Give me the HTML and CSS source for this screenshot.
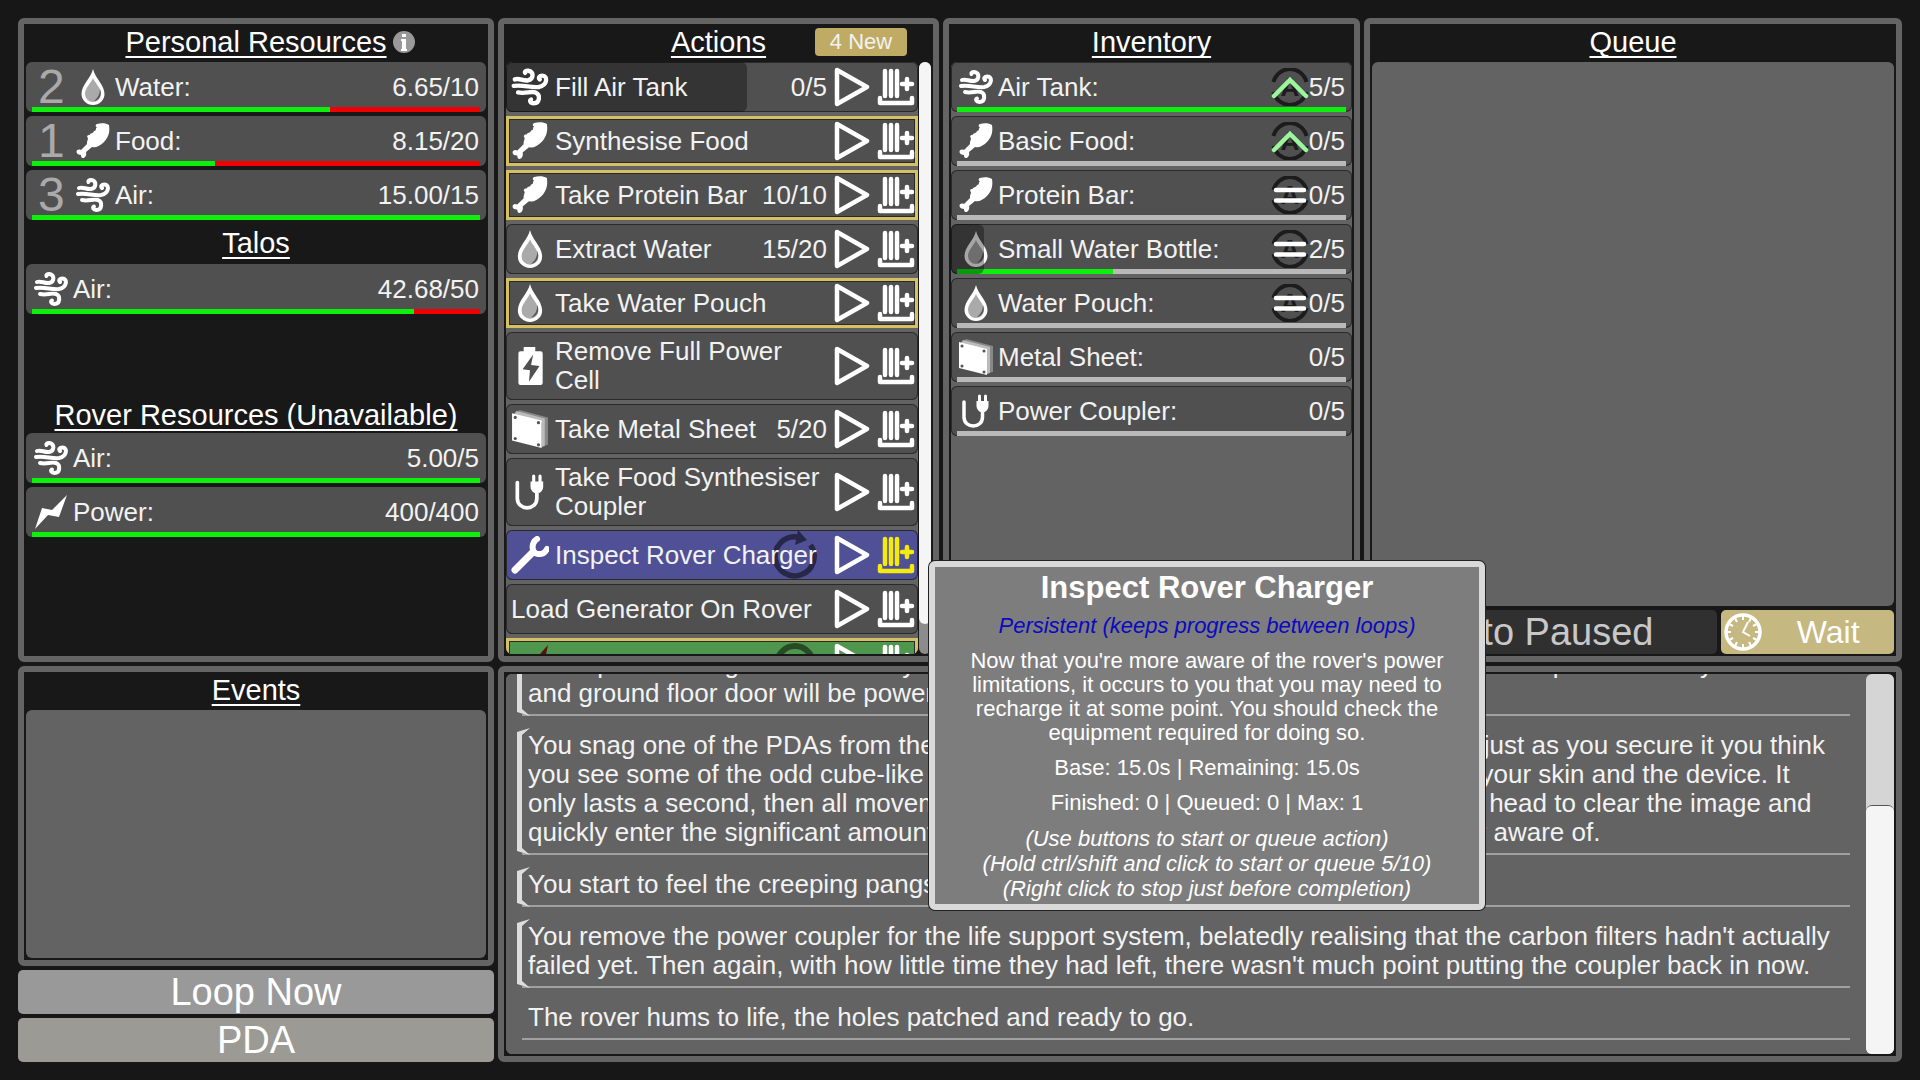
FILE: index.html
```
<!DOCTYPE html>
<html lang="en">
<head>
  <meta charset="UTF-8">
  <title>Rover Loop</title>
  <link rel="stylesheet" href="styles.css">
</head>
<body>
  <!-- Icon sprite -->
  <svg class="sprite" aria-hidden="true">
    <symbol id="i-air" viewBox="0 0 34 35">
      <g fill="none" stroke="#fff" stroke-width="4" stroke-linecap="round">
        <path d="M3 10.500C7 9 10 12 15 11.500C20.500 10.500 21 3 15.500 2.500C13 2.300 12 3.500 12.500 4.500"/>
        <path d="M2 16.500C10 15 18 18.500 25 17.500C33.500 16 33.500 7 28.500 7C25.500 7 24.500 9 26 10.500"/>
        <path d="M6 22.500C13 24 17 21 22 22.500C27 24.500 26 32.500 20.500 32.500C17 32.500 16.500 30 18 29"/>
      </g>
    </symbol>
    <symbol id="i-water" viewBox="0 0 34 36">
      <path fill="#fff" d="M17 0C15 9 5.500 16 5.500 25A11.500 11 0 0 0 28.500 25C28.500 16 19 9 17 0Z"/>
      <path fill="#aaa" d="M17 9C15 14 9 19 9 25A8 8 0 0 0 25 25C25 19 19 14 17 9Z"/>
      <path fill="#555" d="M24 20C26 25 24 31 18 32C22 29 24 25 24 20Z"/>
    </symbol>
    <symbol id="i-food" viewBox="0 0 34 36">
      <path fill="#fff" d="M21 1C25 0 30 0 33 2C34 8 33 14 28 19C24 23 20 25 16 24L10 29C11 32 9 35.500 6.500 35C5 34.500 5 33 5 32C3 32 .5 31 .5 29C.5 26.500 3 26 5 27L11 21C10.500 19 12 17 12 15C10 13.500 12 11.500 13.500 12C14.500 9.500 17 11 18 8C21 8 19 5 21 4.500C19 3.500 19.500 1.500 21 1Z"/>
    </symbol>
    <symbol id="i-power" viewBox="0 0 34 34">
      <path fill="#fff" d="M33 0L25 22L14 20L1 34L8 13L18 15Z"/>
    </symbol>
    <symbol id="i-cell" viewBox="0 0 34 36">
      <path fill="#fff" d="M11 0H22V4H27Q29 4 29 6V34Q29 36 27 36H8Q6 36 6 34V6Q6 4 8 4H11Z"/>
      <path fill="#505050" d="M20 7L10 21L17 22L16 33L26 18L18 17Z"/>
    </symbol>
    <symbol id="i-metal" viewBox="0 0 34 36">
      <path fill="#888" d="M7 0L34 7V33L29 34V12L5 2Z"/>
      <path fill="#bbb" d="M4 1L31 8V34L28 35V12L2 4Z"/>
      <path fill="#fff" d="M0 3L28 10V36L0 29Z"/>
      <g fill="#555">
        <circle cx="3" cy="7" r="1.500"/><circle cx="25" cy="12" r="1.500"/>
        <circle cx="3" cy="27" r="1.500"/><circle cx="25" cy="33" r="1.500"/>
      </g>
    </symbol>
    <symbol id="i-plug" viewBox="0 0 34 36">
      <path fill="none" stroke="#fff" stroke-width="3.500" stroke-linecap="round" d="M5 9V24C5 36 23.500 36 23.500 24V16"/>
      <path fill="none" stroke="#fff" stroke-width="3" stroke-linecap="round" d="M20.500 3V9M26.500 3V9"/>
      <path fill="#fff" d="M17.500 8H29.500V13C29.500 16 27 18.500 25.500 19H21.500C20 18.500 17.500 16 17.500 13Z"/>
    </symbol>
    <symbol id="i-wrench" viewBox="0 0 38 38">
      <g fill="none" stroke="#fff" stroke-linecap="round">
        <path stroke-width="7" d="M4 34L22 16"/>
        <path stroke-width="6" d="M26 3C20 7 20 17 27 18C31 18.500 34 17 36 13"/>
      </g>
    </symbol>
    <symbol id="i-play" viewBox="0 0 36 40">
      <path fill="none" stroke="#fff" stroke-width="4.500" stroke-linejoin="round" d="M3 3L33 20L3 37Z"/>
    </symbol>
    <symbol id="i-queue" viewBox="0 0 38 38">
      <g fill="none" stroke="currentColor" stroke-width="4.500" stroke-linecap="round" stroke-linejoin="round">
        <path d="M8 3V28M14 3V28M20 3V28M25 16H35M30 11V21M3 30V35H35V30"/>
      </g>
    </symbol>
    <symbol id="i-auto" viewBox="0 0 38 38">
      <path fill="none" stroke="#1c1c1c" stroke-width="4" d="M2.500 14A17 17 0 0 1 35.500 14M2.500 24A17 17 0 0 0 35.500 24"/>
      <text class="auto-letter" x="19" y="28" text-anchor="middle">A</text>
    </symbol>
    <symbol id="i-up" viewBox="0 0 38 38">
      <use href="#i-auto"/>
      <path fill="none" stroke="#9cf79c" stroke-width="4.500" stroke-linecap="round" d="M3 28L19 12L35 28"/>
    </symbol>
    <symbol id="i-equal" viewBox="0 0 38 38">
      <use href="#i-auto"/>
      <path fill="none" stroke="#fff" stroke-width="4.500" stroke-linecap="round" d="M5 14H33M5 24.500H33"/>
    </symbol>
    <symbol id="i-loop" viewBox="0 0 44 50">
      <path fill="none" stroke="#000" stroke-width="5.500" d="M24 7A19.500 19.500 0 1 0 37.500 15"/>
      <path d="M25 0L34 10L22 15Z"/>
    </symbol>
    <symbol id="i-clock" viewBox="0 0 38 38">
      <circle cx="19" cy="19" r="17" fill="none" stroke="#fff" stroke-width="3.500"/>
      <path fill="none" stroke="#fff" stroke-width="2" d="M19 3V7M19 31V35M3 19H7M31 19H35M11 5L13 9M27 5L25 9M5 11L9 13M33 11L29 13M5 27L9 25M33 27L29 25M11 33L13 29M27 33L25 29M24 9L19 19L26 23"/>
    </symbol>
    <symbol id="i-info" viewBox="0 0 22 22">
      <circle cx="11" cy="11" r="11" fill="#999"/>
      <path fill="#fff" d="M9 3H13V6H9ZM8 8H13V18H14V20H8V18H9V10H8Z"/>
    </symbol>
  </svg>

  <main class="game">
    <!-- Resources -->
    <section class="panel resources">
      <header class="panel-head">
        <h2>Personal Resources</h2>
        <svg class="info"><use href="#i-info"/></svg>
      </header>
      <div class="rows">
        <div class="row">
          <span class="rank">2</span><svg class="icon"><use href="#i-water"/></svg>
          <span class="name">Water:</span><span class="value">6.65/10</span>
          <div class="bar drain"><i style="width: 66.5%"></i></div>
        </div>
        <div class="row">
          <span class="rank">1</span><svg class="icon"><use href="#i-food"/></svg>
          <span class="name">Food:</span><span class="value">8.15/20</span>
          <div class="bar drain"><i style="width: 40.75%"></i></div>
        </div>
        <div class="row">
          <span class="rank">3</span><svg class="icon"><use href="#i-air"/></svg>
          <span class="name">Air:</span><span class="value">15.00/15</span>
          <div class="bar drain"><i style="width: 100%"></i></div>
        </div>
      </div>
      <header class="panel-head talos"><h2>Talos</h2></header>
      <div class="rows">
        <div class="row">
          <svg class="icon"><use href="#i-air"/></svg>
          <span class="name">Air:</span><span class="value">42.68/50</span>
          <div class="bar drain"><i style="width: 85.36%"></i></div>
        </div>
      </div>
      <header class="panel-head rover"><h2>Rover Resources (Unavailable)</h2></header>
      <div class="rows">
        <div class="row">
          <svg class="icon"><use href="#i-air"/></svg>
          <span class="name">Air:</span><span class="value">5.00/5</span>
          <div class="bar drain"><i style="width: 100%"></i></div>
        </div>
        <div class="row">
          <svg class="icon"><use href="#i-power"/></svg>
          <span class="name">Power:</span><span class="value">400/400</span>
          <div class="bar drain"><i style="width: 100%"></i></div>
        </div>
      </div>
    </section>

    <!-- Actions -->
    <section class="panel actions">
      <header class="panel-head">
        <h2>Actions</h2>
        <button class="new-btn">4 New</button>
      </header>
      <div class="scroller">
        <div class="rows list">
          <div class="row">
            <div class="progress" style="width: 58.4%"></div>
            <svg class="icon"><use href="#i-air"/></svg>
            <span class="name">Fill Air Tank</span><span class="value">0/5</span>
            <button class="act" aria-label="Start"><svg><use href="#i-play"/></svg></button>
            <button class="act" aria-label="Queue"><svg><use href="#i-queue"/></svg></button>
          </div>
          <div class="row new">
            <svg class="icon"><use href="#i-food"/></svg>
            <span class="name">Synthesise Food</span>
            <button class="act" aria-label="Start"><svg><use href="#i-play"/></svg></button>
            <button class="act" aria-label="Queue"><svg><use href="#i-queue"/></svg></button>
          </div>
          <div class="row new">
            <svg class="icon"><use href="#i-food"/></svg>
            <span class="name">Take Protein Bar</span><span class="value">10/10</span>
            <button class="act" aria-label="Start"><svg><use href="#i-play"/></svg></button>
            <button class="act" aria-label="Queue"><svg><use href="#i-queue"/></svg></button>
          </div>
          <div class="row">
            <svg class="icon"><use href="#i-water"/></svg>
            <span class="name">Extract Water</span><span class="value">15/20</span>
            <button class="act" aria-label="Start"><svg><use href="#i-play"/></svg></button>
            <button class="act" aria-label="Queue"><svg><use href="#i-queue"/></svg></button>
          </div>
          <div class="row new">
            <svg class="icon"><use href="#i-water"/></svg>
            <span class="name">Take Water Pouch</span>
            <button class="act" aria-label="Start"><svg><use href="#i-play"/></svg></button>
            <button class="act" aria-label="Queue"><svg><use href="#i-queue"/></svg></button>
          </div>
          <div class="row">
            <svg class="icon"><use href="#i-cell"/></svg>
            <span class="name">Remove Full Power Cell</span>
            <button class="act" aria-label="Start"><svg><use href="#i-play"/></svg></button>
            <button class="act" aria-label="Queue"><svg><use href="#i-queue"/></svg></button>
          </div>
          <div class="row">
            <svg class="icon"><use href="#i-metal"/></svg>
            <span class="name">Take Metal Sheet</span><span class="value">5/20</span>
            <button class="act" aria-label="Start"><svg><use href="#i-play"/></svg></button>
            <button class="act" aria-label="Queue"><svg><use href="#i-queue"/></svg></button>
          </div>
          <div class="row">
            <svg class="icon"><use href="#i-plug"/></svg>
            <span class="name">Take Food Synthesiser Coupler</span>
            <button class="act" aria-label="Start"><svg><use href="#i-play"/></svg></button>
            <button class="act" aria-label="Queue"><svg><use href="#i-queue"/></svg></button>
          </div>
          <div class="row persistent">
            <svg class="loop-mark"><use href="#i-loop"/></svg>
            <svg class="icon"><use href="#i-wrench"/></svg>
            <span class="name">Inspect Rover Charger</span>
            <button class="act" aria-label="Start"><svg><use href="#i-play"/></svg></button>
            <button class="act hover" aria-label="Queue"><svg><use href="#i-queue"/></svg></button>
          </div>
          <div class="row">
            <span class="name">Load Generator On Rover</span>
            <button class="act" aria-label="Start"><svg><use href="#i-play"/></svg></button>
            <button class="act" aria-label="Queue"><svg><use href="#i-queue"/></svg></button>
          </div>
          <div class="row new travel">
            <svg class="loop-mark" viewBox="0 0 44 50"><circle cx="22" cy="26" r="18" fill="none" stroke="#000" stroke-width="6"/></svg>
            <svg class="icon" viewBox="0 0 38 38"><path fill="#5a1010" d="M37 1L22 18L33 20Z"/></svg>
            <span class="name"></span>
            <button class="act" aria-label="Start"><svg><use href="#i-play"/></svg></button>
            <button class="act" aria-label="Queue"><svg><use href="#i-queue"/></svg></button>
          </div>
        </div>
        <div class="track"><div class="thumb" style="height: 95%"></div></div>
      </div>
    </section>

    <!-- Inventory -->
    <section class="panel inventory">
      <header class="panel-head"><h2>Inventory</h2></header>
      <div class="rows list">
        <div class="row">
          <svg class="icon"><use href="#i-air"/></svg><span class="name">Air Tank:</span>
          <button class="auto" aria-label="Auto use: up"><svg><use href="#i-up"/></svg></button><span class="value">5/5</span>
          <div class="bar"><i style="width: 100%"></i></div>
        </div>
        <div class="row">
          <svg class="icon"><use href="#i-food"/></svg><span class="name">Basic Food:</span>
          <button class="auto" aria-label="Auto use: up"><svg><use href="#i-up"/></svg></button><span class="value">0/5</span>
          <div class="bar"></div>
        </div>
        <div class="row">
          <svg class="icon"><use href="#i-food"/></svg><span class="name">Protein Bar:</span>
          <button class="auto" aria-label="Auto use: equal"><svg><use href="#i-equal"/></svg></button><span class="value">0/5</span>
          <div class="bar"></div>
        </div>
        <div class="row">
          <svg class="icon"><use href="#i-water"/></svg><span class="name">Small Water Bottle:</span>
          <button class="auto" aria-label="Auto use: equal"><svg><use href="#i-equal"/></svg></button><span class="value">2/5</span>
          <div class="bar"><i style="width: 40%"></i></div>
          <div class="progress" style="width: 8.2%"></div>
        </div>
        <div class="row">
          <svg class="icon"><use href="#i-water"/></svg><span class="name">Water Pouch:</span>
          <button class="auto" aria-label="Auto use: equal"><svg><use href="#i-equal"/></svg></button><span class="value">0/5</span>
          <div class="bar"></div>
        </div>
        <div class="row">
          <svg class="icon"><use href="#i-metal"/></svg><span class="name">Metal Sheet:</span><span class="value">0/5</span>
          <div class="bar"></div>
        </div>
        <div class="row">
          <svg class="icon"><use href="#i-plug"/></svg><span class="name">Power Coupler:</span><span class="value">0/5</span>
          <div class="bar"></div>
        </div>
      </div>
    </section>

    <!-- Queue -->
    <section class="panel queue">
      <header class="panel-head"><h2>Queue</h2></header>
      <div class="list"></div>
      <div class="queue-buttons">
        <button class="pause-btn">Auto Paused</button>
        <button class="wait-btn"><svg><use href="#i-clock"/></svg><span>Wait</span></button>
      </div>
    </section>

    <!-- Events and loop buttons -->
    <div class="side">
      <section class="panel events">
        <header class="panel-head"><h2>Events</h2></header>
        <div class="list"></div>
      </section>
      <button class="loop-btn">Loop Now</button>
      <button class="loop-btn pda">PDA</button>
    </div>

    <!-- Story log -->
    <section class="panel log">
      <div class="scroller">
        <div class="entries list">
          <p class="entry marked">Once power has gone back everywhere, most of the rest of the ruined site should wake up and actually<br>and ground floor door will be powered.</p>
          <p class="entry marked">You snag one of the PDAs from the nearby shelves and hold it up to your arm, and just as you secure it you think<br>you see some of the odd cube-like creatures crawling up through the gap between your skin and the device. It<br>only lasts a second, then all movement has gone from under there. You shake your head to clear the image and<br>quickly enter the significant amount of data on this whole place that you are already aware of.</p>
          <p class="entry marked">You start to feel the creeping pangs of hunger.</p>
          <p class="entry marked">You remove the power coupler for the life support system, belatedly realising that the carbon filters hadn't actually failed yet. Then again, with how little time they had left, there wasn't much point putting the coupler back in now.</p>
          <p class="entry">The rover hums to life, the holes patched and ready to go.</p>
        </div>
        <div class="track"><div class="thumb" style="height: 65.5%"></div></div>
      </div>
    </section>
  </main>

  <!-- Hover tooltip -->
  <div class="tooltip" role="tooltip">
    <h3>Inspect Rover Charger</h3>
    <p class="kind">Persistent (keeps progress between loops)</p>
    <p>Now that you're more aware of the rover's power limitations, it occurs to you that you may need to recharge it at some point. You should check the equipment required for doing so.</p>
    <p>Base: 15.0s | Remaining: 15.0s</p>
    <p>Finished: 0 | Queued: 0 | Max: 1</p>
    <p class="hints">(Use buttons to start or queue action)<br>(Hold ctrl/shift and click to start or queue 5/10)<br>(Right click to stop just before completion)</p>
  </div>
</body>
</html>
```
FILE: styles.css
```
* { box-sizing: border-box; }
body { margin: 0; background: #171717; color: #f2f2f2; font-family: "Liberation Sans", Arial, sans-serif; font-size: 26px; line-height: 29px; }
h2, h3, p { margin: 0; font-weight: normal; }
button { padding: 0; border: none; background: none; color: inherit; font-family: inherit; cursor: pointer; }
svg { display: block; }
.sprite { position: absolute; width: 0; height: 0; }

.game { display: grid; grid-template-columns: 476fr 441fr 417fr 538fr; grid-template-rows: 644fr 396fr; gap: 4px; height: 100vh; padding: 18px; }
.panel { display: flex; flex-direction: column; min-width: 0; min-height: 0; padding: 0 2px 2px; background: #181818; border: 6px solid #646464; border-radius: 6px; }
.side { display: flex; flex-direction: column; gap: 4px; min-height: 0; }
.log { grid-column: 2 / 5; padding: 2px; }

.panel-head { display: grid; grid-template-columns: 1fr auto 1fr; align-items: center; flex: none; height: 38px; padding-bottom: 2px; column-gap: 6px; }
.panel-head h2 { grid-column: 2; color: #fff; font-size: 29px; line-height: 34px; text-decoration: underline; text-decoration-thickness: 2px; text-underline-offset: 4px; text-decoration-skip-ink: none; }
.talos { margin-top: 6px; padding-bottom: 4px; }
.rover { height: 36px; margin-top: 83px; padding-bottom: 0; }
.info { width: 22px; height: 22px; }
.new-btn { justify-self: end; width: 92px; height: 28px; margin-right: 24px; border-radius: 4px; background: #bfab63; font-size: 22px; line-height: 28px; }

.rows { display: flex; flex-direction: column; gap: 4px; }
.row { position: relative; display: flex; align-items: center; flex: none; min-height: 50px; padding: 4px 7px 4px 8px; background: #505050; border-radius: 6px; }
.icon { flex: none; width: 34px; height: 36px; margin-right: 5px; }
.rank { width: 42px; padding-left: 4px; color: #aaa; font-size: 48px; line-height: 42px; }
.name { position: relative; flex: 1; }
.value { position: relative; white-space: nowrap; }
.bar { position: absolute; left: 6px; right: 6px; bottom: 0; height: 5px; background: #b9b9b9; }
.bar.drain { background: #f00000; }
.bar i { display: block; height: 100%; background: #0cf00c; }
.progress { position: absolute; left: 0; top: 0; bottom: 0; background: rgba(0, 0, 0, 0.35); border-radius: 6px; }

.list { flex: 1; min-width: 0; min-height: 0; overflow: hidden; background: #636363; border-radius: 6px; }
.list .row { box-shadow: inset 0 0 0 1px #2a2a2a; }
.scroller { display: flex; flex: 1; min-height: 0; gap: 1px; }
.track { flex: none; width: 12px; background: #8c8c8c; border-radius: 6px; }
.thumb { background: #f5f5f5; border-radius: 6px; }

.actions .row { padding: 5px 3px 5px 5px; }
.actions .icon { position: relative; width: 38px; height: 38px; margin-right: 6px; }
.actions .value { margin-right: 6px; }
.actions .row.new { border-radius: 0; box-shadow: inset 0 0 0 3px #d6c064, inset 0 0 0 4px #2a2a2a; }
.actions .row.persistent { background: #505096; }
.actions .row.travel { background: #4f964f; }
.act { position: relative; flex: none; width: 38px; height: 40px; color: #fff; }
.act + .act { margin-left: 6px; }
.act svg { width: 100%; height: 100%; }
.act.hover { color: #f5ea10; }
.loop-mark { position: absolute; right: 101px; top: 0; width: 44px; height: 50px; opacity: 0.5; }

.auto { width: 38px; height: 38px; }
.auto svg { width: 38px; height: 38px; }
.auto-letter { font-size: 26px; font-weight: bold; fill: #1c1c1c; }

.queue-buttons { display: flex; gap: 4px; padding-top: 4px; }
.pause-btn { flex: 2; height: 44px; background: #303030; border-radius: 5px; color: #c8c8c8; font-size: 38px; line-height: 44px; }
.wait-btn { display: flex; align-items: center; flex: 1; height: 44px; background: #c5b880; border-radius: 5px; font-size: 32px; color: #fff; }
.wait-btn svg { width: 38px; height: 38px; margin-left: 3px; }
.wait-btn span { flex: 1; }

.events { flex: 1; }
.loop-btn { flex: none; height: 44px; background: #999; border-radius: 5px; color: #fff; font-size: 38px; line-height: 44px; }
.loop-btn.pda { background: #9b9a94; }

.log .scroller { gap: 16px; background: #636363; border-radius: 6px; }
.log .track { width: 28px; background: #d5d5d5; display: flex; flex-direction: column; justify-content: flex-end; }
.log .thumb { border-top: 1px solid #555; }
.entries { display: flex; flex-direction: column; justify-content: flex-end; padding: 0 0 14px 16px; }
.entry { position: relative; flex: none; padding: 15px 0 6px 6px; border-bottom: 2px solid #a0a0a0; }
.entry.marked::before { content: ""; position: absolute; left: -5px; top: 12px; bottom: -2px; width: 13px; background: #ddd; clip-path: polygon(100% 0, 0 4px, 0 calc(100% - 4px), 100% 100%, 5px calc(100% - 7px), 5px 7px); }

.tooltip { position: absolute; left: 929px; top: 561px; display: flex; flex-direction: column; gap: 11px; width: 556px; padding: 6px 24px 3px; background: #7d7d7d; border: 6px solid #d9d9d9; border-radius: 6px; box-shadow: 0 0 0 1px #222; color: #fff; font-size: 22px; line-height: 24px; text-align: center; }
.tooltip h3 { font-size: 31px; font-weight: bold; line-height: 30px; }
.tooltip .kind { color: #0a0ac0; font-style: italic; }
.tooltip .hints { font-style: italic; line-height: 25px; }
```
